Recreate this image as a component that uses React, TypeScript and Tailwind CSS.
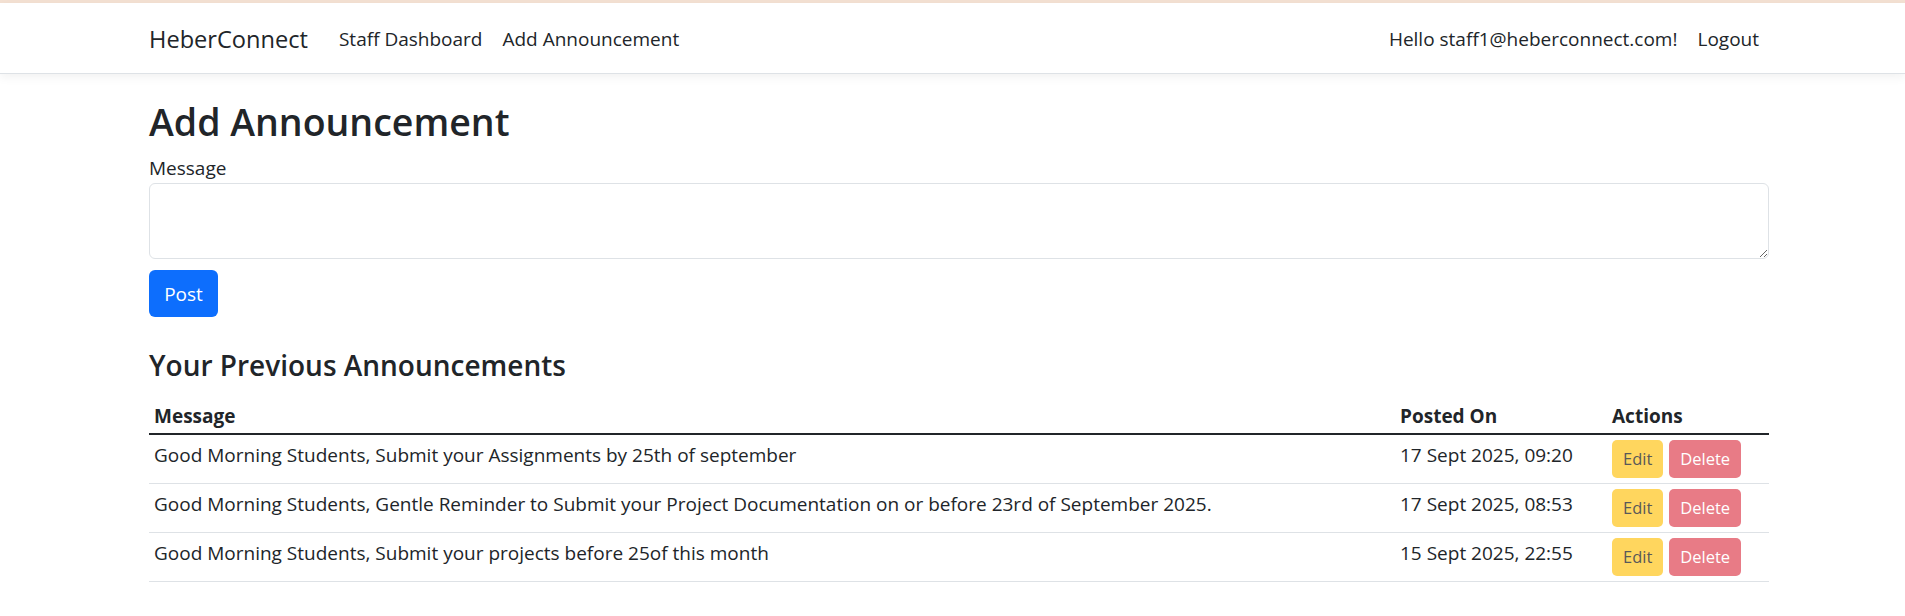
import { useState } from "react";

interface Announcement { message: string; postedOn: string; }

const announcements: Announcement[] = [
  { message: "Good Morning Students, Submit your Assignments by 25th of september", postedOn: "17 Sept 2025, 09:20" },
  { message: "Good Morning Students, Gentle Reminder to Submit your Project Documentation on or before 23rd of September 2025.", postedOn: "17 Sept 2025, 08:53" },
  { message: "Good Morning Students, Submit your projects before 25of this month", postedOn: "15 Sept 2025, 22:55" },
];

export default function App() {
  const [message, setMessage] = useState("");

  return (
    <div className="min-h-screen bg-white text-[#212529] text-[19px] leading-[26.4px]" style={{ fontFamily: "'Open Sans', 'Segoe UI', 'Liberation Sans', sans-serif" }}>
      <div className="h-[3px] bg-[#f4e1d3]" />
      <nav className="h-[71px] bg-white border-b border-[#dee2e6] shadow-[0_3px_10px_rgba(0,0,0,0.06)]">
        <div className="h-full ml-[149px] w-[1620px] flex items-center pt-[2px]">
          <a className="text-[23.6px] leading-[33px] mr-[21px]">HeberConnect</a>
          <a className="px-[10px]">Staff Dashboard</a>
          <a className="px-[10px]">Add Announcement</a>
          <div className="ml-auto flex items-center">
            <span className="px-[10px]">Hello staff1@heberconnect.com!</span>
            <a className="px-[10px]">Logout</a>
          </div>
        </div>
      </nav>

      <main className="ml-[149px] w-[1620px] pt-[25px]">
        <h1 className="text-[37.5px] leading-[45px] font-semibold mb-[11px]">Add Announcement</h1>
        <label className="block">Message</label>
        <textarea
          rows={2}
          value={message}
          onChange={(e) => setMessage(e.target.value)}
          className="block w-full h-[76px] mt-[2px] px-[13px] py-[7px] border border-[#dee2e6] rounded-[6px] bg-white outline-none"
        />
        <button className="mt-[11px] h-[47px] w-[69px] rounded-[6px] bg-[#0d6efd] text-white">Post</button>

        <h3 className="mt-[32px] mb-[13px] text-[28px] leading-[33px] font-semibold">Your Previous Announcements</h3>

        <div className="grid grid-cols-[1246px_212px_162px]">
          <div className="px-[5px] h-[40px] flex items-end pb-[4px] font-bold border-b-2 border-[#212529]">Message</div>
          <div className="px-[5px] h-[40px] flex items-end pb-[4px] font-bold border-b-2 border-[#212529]">Posted On</div>
          <div className="px-[5px] h-[40px] flex items-end pb-[4px] font-bold border-b-2 border-[#212529]">Actions</div>
          {announcements.map((a, idx) => (
            <div key={idx} className="contents">
              <div className="px-[5px] pt-[7px] h-[49px] border-b border-[#dee2e6]">{a.message}</div>
              <div className="px-[5px] pt-[7px] h-[49px] border-b border-[#dee2e6]">{a.postedOn}</div>
              <div className="px-[5px] h-[49px] flex items-center gap-[6px] border-b border-[#dee2e6]">
                <button disabled className="h-[38px] px-[11px] rounded-[5px] bg-[#ffd65e] text-[#595959] text-[16.5px]">Edit</button>
                <button disabled className="h-[38px] px-[11px] rounded-[5px] bg-[#e87b86] text-white text-[16.5px]">Delete</button>
              </div>
            </div>
          ))}
        </div>
      </main>
    </div>
  );
}
